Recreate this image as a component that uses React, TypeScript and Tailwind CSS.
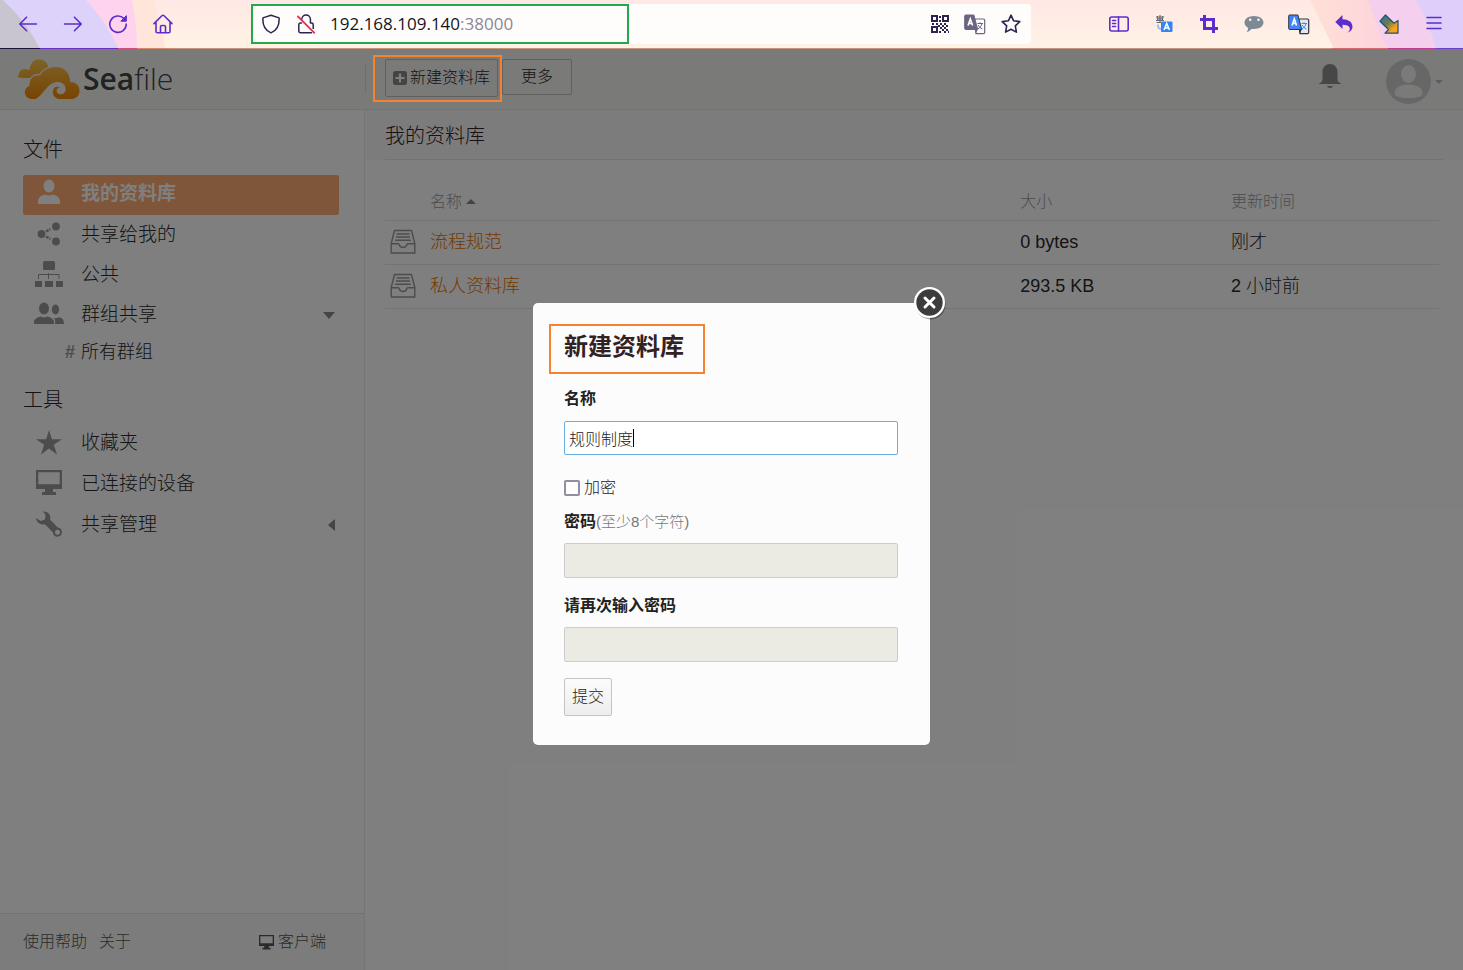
import React from "react";
import type { ReactNode } from "react";

/* ---------- Browser toolbar icons ---------- */

const stroke = { fill: "none", stroke: "currentColor", strokeLinecap: "round", strokeLinejoin: "round" } as const;

const BackIcon = () => (
  <svg width="20" height="20" viewBox="0 0 20 20" {...stroke} strokeWidth="1.6">
    <path d="M18.5 10H2M8.6 3.2 1.8 10l6.8 6.8" />
  </svg>
);
const ForwardIcon = () => (
  <svg width="20" height="20" viewBox="0 0 20 20" {...stroke} strokeWidth="1.6">
    <path d="M1.5 10H18M11.4 3.2 18.2 10l-6.8 6.8" />
  </svg>
);
const ReloadIcon = () => (
  <svg width="20" height="20" viewBox="0 0 20 20" {...stroke} strokeWidth="1.6">
    <path d="M16 4.6A8.2 8.2 0 1 0 18.2 10" />
    <path d="M18.4 2v5.2h-5.2z" fill="currentColor" strokeWidth="1" />
  </svg>
);
const HomeIcon = () => (
  <svg width="20" height="20" viewBox="0 0 20 20" {...stroke} strokeWidth="1.6">
    <path d="M1 9.6 8.9 1.7a1.5 1.5 0 0 1 2.2 0L19 9.6M3 8.5v9a1.3 1.3 0 0 0 1.3 1.3h11.4A1.3 1.3 0 0 0 17 17.500v-9" />
    <path d="M7.500 18.500v-5.500a1.500 1.500 0 0 1 1.500-1.500h2a1.500 1.500 0 0 1 1.500 1.500v5.500" />
  </svg>
);
const ShieldIcon = () => (
  <svg width="20" height="20" viewBox="0 0 20 20" {...stroke} strokeWidth="1.5">
    <path d="M10 1.200 17.300 3.600a1.200 1.200 0 0 1 .9 1.200C18.200 12 15.500 16.800 10 18.900 4.500 16.800 1.800 12 1.800 4.800a1.200 1.200 0 0 1 .9-1.200z" />
  </svg>
);
const InsecureIcon = () => (
  <svg width="20" height="20" viewBox="0 0 20 20" {...stroke} strokeWidth="1.5">
    <path d="M5.800 5.200a4.300 4.300 0 0 1 8.600 0V9h1.200a1.600 1.600 0 0 1 1.600 1.600v4M5.500 9H4.400a1.600 1.600 0 0 0-1.600 1.600v6.400A1.700 1.700 0 0 0 4.500 18.700h11" />
    <path d="M2 2.500 18.300 18.800" stroke="#e0345a" strokeWidth="1.800" />
  </svg>
);
const QrIcon = () => (
  <svg width="18" height="18" viewBox="0 0 18 18" fill="currentColor" shapeRendering="crispEdges">
    <path fillRule="evenodd" d="M0 0h7v7H0zM2 2v3h3V2zM11 0h7v7h-7zM13 2v3h3V2zM0 11h7v7H0zM2 13v3h3v-3z" />
    <path d="M8 1h2v2H8zM8 5h2v2H8zM1 8h2v2H1zM5 8h2v2H5zM9 8h2v2H9zM13 8h2v2h-2zM7 10h2v2H7zM11 10h2v2h-2zM15 10h2v2h-2zM9 12h2v2H9zM13 12h2v2h-2zM11 14h2v2h-2zM15 14h2v2h-2zM8 16h2v2H8zM13 16h2v2h-2zM17 16h1v2h-1z" />
  </svg>
);
const TranslateIcon = ({ front, back, ink }: { front: string; back: string; ink: string }) => (
  <svg width="22" height="21" viewBox="0 0 22 21">
    <path d="M10 5h9.500a1.200 1.200 0 0 1 1.200 1.200v12.300a1.200 1.200 0 0 1-1.200 1.200H12z" fill={back} stroke={ink} strokeWidth="1.200" />
    <path d="M13.500 9.500h5.500M16 8.300v1.200M18 9.500c-.6 2.500-2 4.300-4 5.500M14.200 11c.8 1.600 2.200 3.100 4.200 4" fill="none" stroke={front} strokeWidth="1" />
    <path d="M1.700 1h8.200l3.800 14.500H1.700a1 1 0 0 1-1-1V2a1 1 0 0 1 1-1z" fill={front} stroke={ink} strokeWidth="1" />
    <path d="m11 15.500 2.700 0-1.700 4z" fill={ink} />
    <path d="M4 11.500 6.300 5 8.600 11.500M4.800 9.500h3" fill="none" stroke="#fff" strokeWidth="1.600" />
  </svg>
);
const StarIcon = () => (
  <svg width="20" height="20" viewBox="0 0 20 20" {...stroke} strokeWidth="1.600">
    <path d="m10 1.200 2.600 5.600 6.200.8-4.500 4.300 1.100 6.200L10 15.200l-5.400 2.900 1.100-6.200L1.200 7.600l6.200-.8z" />
  </svg>
);
const SidebarIcon = () => (
  <svg width="20" height="20" viewBox="0 0 20 20" {...stroke} strokeWidth="1.600">
    <rect x="0.800" y="3" width="18.400" height="14" rx="2" />
    <path d="M9.500 3v14M3.600 6.500h3M3.600 9.500h3M3.600 12.500h3" />
  </svg>
);
const PageTranslateIcon = () => (
  <svg width="18" height="18" viewBox="0 0 18 18">
    <path d="M1 2h8M2.500 1v5M7.500 1v5M5 0v8M1 5.500h8M2 3.800h6M1.500 7.500h6" fill="none" stroke="#6b6b6b" strokeWidth="1.200" />
    <path d="M2.800 9.500c0 3 1 4.500 3.700 4.500" fill="none" stroke="#9cc3f5" strokeWidth="2" />
    <rect x="6" y="6.500" width="11.500" height="10.500" rx="1" fill="#3584f2" />
    <path d="m9 15 2.700-6.500L14.500 15M10 13h3.600" fill="none" stroke="#fff" strokeWidth="1.500" />
  </svg>
);
const CropIcon = () => (
  <svg width="18" height="18" viewBox="0 0 18 18" fill="none" stroke="currentColor" strokeWidth="3">
    <path d="M4.500 0v13.500H18M0 4.500h13.500V18" />
  </svg>
);
const ChatIcon = () => (
  <svg width="20" height="18" viewBox="0 0 20 18">
    <path d="M10 1c5.300 0 9.500 2.800 9.500 6.600 0 3.700-4.200 6.500-9.500 6.500-1 0-1.700 0-2.600-.2C6.300 15.500 4.500 16.600 2.500 17c1-1 1.600-2.400 1.600-4C1.900 11.800.5 9.900.5 7.600.5 3.800 4.700 1 10 1z" fill="#7d8a93" />
    <circle cx="6.200" cy="4.800" r="1.200" fill="#fff" />
    <circle cx="14.500" cy="4.800" r="1.200" fill="#fff" />
  </svg>
);
const UndoIcon = () => (
  <svg width="18" height="18" viewBox="0 0 18 18" fill="currentColor">
    <path d="M7.500 0v4.200c6 .1 10 2.800 10 7.600 0 2.800-1.900 5-5.500 6 2.300-1.400 3.200-3 2.700-4.800-.6-2.200-3.200-3.200-7.200-3.200V14L.3 7z" />
  </svg>
);
const ArrowCornerIcon = () => (
  <svg width="20" height="20" viewBox="0 0 20 20">
    <defs>
      <linearGradient id="corner-arrow" x1="0" y1="0" x2="1" y2="1">
        <stop offset="0.150" stopColor="#2f7d95" />
        <stop offset="0.450" stopColor="#6d7a4a" />
        <stop offset="0.750" stopColor="#f5a21c" />
      </linearGradient>
    </defs>
    <path d="M6.500 1 15 9.200 19 6.500V19.200H6L9.500 15.500 1 7.200z" fill="url(#corner-arrow)" stroke="#23506b" strokeWidth="1.200" strokeLinejoin="round" />
  </svg>
);
const MenuIcon = () => (
  <svg width="16" height="16" viewBox="0 0 16 16" {...stroke} strokeWidth="1.500">
    <path d="M1 1.500h14M1 7h14M1 12.500h14" />
  </svg>
);

/* ---------- Seafile icons ---------- */

const CloudLogo = () => (
  <svg width="65" height="42" viewBox="50 174 194 126" aria-hidden="true">
    <defs>
      <linearGradient id="cloud-fill" gradientUnits="userSpaceOnUse" x1="0" y1="178" x2="0" y2="297">
        <stop offset="0" stopColor="#fbc64f" />
        <stop offset="1" stopColor="#f08705" />
      </linearGradient>
    </defs>
    <path fill="url(#cloud-fill)" d="M54 228c8-2 2-20 20-20 8 0 11 2 16 2 2-20 14-32 28-32 16 0 28 12 28 25 0 30-40 28-54 31H70c-8 0-14-2-16-6z" />
    <path
      fill="url(#cloud-fill)"
      stroke="#f4f4f3"
      strokeWidth="8"
      paintOrder="stroke"
      d="M97 297c-13 0-21-10-21-20 0-9 6-17 14-19-2-20 12-36 32-32 8-16 28-25 46-25 26 0 44 19 44 45 20 0 28 14 28 26 0 16-12 25-26 25z"
    />
    <path fill="#f4f4f3" d="M110 302v-6c22-12 34-48 62-50 20-1 29 14 26 26-4 13-21 14-26 4-2-6 2-13 9-12-7-8-21-3-21 12 0 11 7 18 17 21v5z" />
  </svg>
);
const PersonIcon = () => (
  <svg width="24" height="26" viewBox="0 0 24 26" fill="currentColor">
    <ellipse cx="12" cy="7" rx="5.500" ry="6.500" />
    <path d="M1 25v-2.500C1 18.500 5 16 8.500 15.600c2 1.300 5 1.300 7 0C19 16 23 18.500 23 22.500V25z" />
  </svg>
);
const ShareIcon = () => (
  <svg width="24" height="24" viewBox="0 0 24 24" fill="currentColor">
    <circle cx="4.500" cy="12" r="3.900" />
    <circle cx="19" cy="4.500" r="3.900" />
    <circle cx="19" cy="19.500" r="3.900" />
    <path d="m9 9.500 4.500-2.400M9 14.500l4.500 2.400" stroke="currentColor" strokeWidth="2.500" strokeDasharray="3 1" />
  </svg>
);
const SitemapIcon = () => (
  <svg width="28" height="27" viewBox="0 0 28 27" fill="currentColor">
    <rect x="8" y="0" width="12" height="9" rx="1.500" />
    <path d="M3.500 18v-4.500h20.500V18M13.500 12v6" fill="none" stroke="currentColor" />
    <path d="M0 20h7v6H0zM10 20h8v6h-8zM21 20h7v6h-7z" />
  </svg>
);
const GroupIcon = () => (
  <svg width="30" height="24" viewBox="0 0 30 24" fill="currentColor">
    <ellipse cx="10" cy="6.500" rx="5" ry="6" />
    <path d="M0 22v-2c0-3 3.500-5 7-5.600 2 1.300 4 1.300 6 0 3.500.6 7 2.600 7 5.600v2z" />
    <ellipse cx="21.500" cy="7.500" rx="3.700" ry="5" />
    <path d="M21 22h9c0-4-1.500-6.200-5.500-6.800-1.600 1.200-3.800 1.200-5 .3 1.500 1.500 2 3.500 1.500 6.500z" />
  </svg>
);
const StarSolidIcon = () => (
  <svg width="26" height="25" viewBox="0 0 26 25" fill="currentColor">
    <path d="m13 0 2.900 9.200H26l-8.200 5.500L21 24.500l-8-6-8 6 3.200-9.800L0 9.200h10.100z" />
  </svg>
);
const MonitorIcon = ({ size }: { size: number }) => (
  <svg width={size} height={size} viewBox="0 0 26 26" fill="currentColor">
    <path fillRule="evenodd" d="M0 0h26v19H17v3h3v3H6v-3h3v-3H0zM2.300 2.300v12h21.400v-12z" />
  </svg>
);
const WrenchIcon = () => (
  <svg width="26" height="26" viewBox="0 0 26 26" fill="currentColor">
    <path fillRule="evenodd" d="M7 .5c4-.8 7.500 2.500 7.300 6-.1 1.300-.4 2-.4 2l8 8c2.500.2 4.100 2 4.100 4.600 0 2.800-2 4.700-4.600 4.700-2.700 0-4.400-1.900-4.500-4.300L9 13.300c-4 1-8.500-1.500-9-6.300l4.800 3L9 8.500 9.500 4zM21.500 18.700a2.500 2.500 0 1 0 0 5 2.500 2.500 0 0 0 0-5z" />
  </svg>
);
const LibraryIcon = () => (
  <svg width="26" height="26" viewBox="0 0 26 26" fill="none" stroke="currentColor" strokeWidth="1.400" strokeLinejoin="round">
    <path d="M4.500 1.500h17l3.300 13v9.500H1.200v-9.500zM1.200 14.800h6.800c.6 0 1 .4 1.200 1 .6 1.800 2 2.700 3.800 2.700s3.200-.9 3.800-2.700c.2-.6.6-1 1.200-1h6.800" />
    <path d="M6.500 5h13M6 8h14M5.200 11.300h15.600" strokeWidth="1.600" />
  </svg>
);
const BellIcon = () => (
  <svg width="22" height="25" viewBox="0 0 22 25" fill="currentColor">
    <path d="M11 0c4.500 0 7.500 3.500 7.500 8v7.500c0 2 1.500 3 3.500 4V20H0v-.5c2-1 3.500-2 3.500-4V8c0-4.500 3-8 7.500-8zM8 22h6c-.3 1.200-1.500 2-3 2s-2.700-.8-3-2z" />
  </svg>
);
const AvatarIcon = () => (
  <svg width="45" height="45" viewBox="0 0 45 45">
    <circle cx="22.500" cy="22.500" r="22.500" fill="#cfcfcf" />
    <ellipse cx="22.500" cy="15" rx="7.500" ry="9" fill="#f4f4f3" />
    <path d="M8.500 34c0-5 6-8.500 14-8.500s14 3.500 14 8.500c0 3-4 5-14 5s-14-2-14-5z" fill="#f4f4f3" />
  </svg>
);
const PlusSquareIcon = () => (
  <svg width="14" height="14" viewBox="0 0 14 14">
    <rect width="14" height="14" rx="2.500" fill="#888" />
    <path d="M7 2.500v9M2.500 7h9" stroke="#fff" strokeWidth="2.200" />
  </svg>
);
const CloseIcon = () => (
  <svg width="34" height="34" viewBox="0 0 34 34">
    <circle cx="17.500" cy="18.500" r="15" fill="#000" opacity="0.350" />
    <circle cx="16.500" cy="16.500" r="15.500" fill="#fff" />
    <circle cx="16.500" cy="16.500" r="13.200" fill="#3c3c3c" />
    <path d="m12 12 9 9m0-9-9 9" stroke="#fff" strokeWidth="3" strokeLinecap="round" />
  </svg>
);

/* ---------- Browser toolbar ---------- */

function ThemeArt() {
  return (
    <>
      <div className="absolute inset-0 bg-linear-to-b from-[#ffe8e5] to-[#fff3e5]" />
      <svg className="absolute left-0 top-0" width="170" height="49" viewBox="0 0 170 49" aria-hidden="true">
        <path d="M0 0h153q9 24 12 49H0z" fill="#ffe5da" />
        <path d="M0 0h132q5 24 5 49H0z" fill="#fdd3ee" />
        <path d="M0 0h86q20 22 33 49H0z" fill="#ddd2fa" />
        <path d="M0 0h3q24 22 37 49H0z" fill="#c9c5cf" />
        <path d="M0 48.500h40" stroke="#1d1140" />
        <path d="M40 48.500h78" stroke="#6a2fc4" />
        <path d="M118 48.500h19" stroke="#d04f80" />
        <path d="M137 48.500h33" stroke="#cf8a6a" />
      </svg>
      <div className="absolute bottom-0 left-[170px] right-[130px] h-px bg-[#c8957a]" />
      <svg className="absolute right-0 top-0" width="155" height="49" viewBox="0 0 155 49" aria-hidden="true">
        <defs>
          <linearGradient id="theme-peach" x1="0" y1="0" x2="1" y2="0">
            <stop offset="0" stopColor="#ffe0d6" />
            <stop offset="0.500" stopColor="#fdd3dc" />
          </linearGradient>
        </defs>
        <path d="M2 0q12 24 24 49h129V0z" fill="url(#theme-peach)" />
        <path d="M60 0q8 25 20 49h75V0z" fill="#f4cfee" />
        <path d="M108 0q14 24 20 49h27V0z" fill="#ddcffa" />
        <path d="M24 48.500h56" stroke="#d56a70" />
        <path d="M80 48.500h48" stroke="#bd3f94" />
        <path d="M128 48.500h27" stroke="#6b3fd0" />
      </svg>
    </>
  );
}

function ToolButton({ label, children }: { label: string; children: ReactNode }) {
  return (
    <button type="button" aria-label={label} className="flex h-10 w-[45px] items-center justify-center">
      {children}
    </button>
  );
}

function BrowserBar() {
  return (
    <header className="relative h-[49px] text-[#5b2ecb]">
      <ThemeArt />
      <div className="relative flex h-12 items-center pl-[5px] pr-[7px]">
        <ToolButton label="后退"><BackIcon /></ToolButton>
        <ToolButton label="前进"><ForwardIcon /></ToolButton>
        <ToolButton label="刷新"><ReloadIcon /></ToolButton>
        <ToolButton label="主页"><HomeIcon /></ToolButton>
        <div className="relative ml-[66px] mr-[65px] flex h-10 flex-1 items-center rounded bg-[#fffdfb] pl-2.5 text-[#2f2450]">
          <span className="pointer-events-none absolute left-0 top-0 h-10 w-[378px] border-2 border-[#22a94a]" />
          <span className="flex items-center gap-[15px]">
            <ShieldIcon />
            <InsecureIcon />
          </span>
          <span className="ml-3.5 font-['Open_Sans',sans-serif] text-[17px] font-normal leading-6 text-[#15141a]">
            192.168.109.140<span className="text-[#8b8794]">:38000</span>
          </span>
          <span className="ml-auto flex items-center gap-[15px] pr-2.5">
            <QrIcon />
            <TranslateIcon front="#6c6480" back="#fffdfb" ink="#6c6480" />
            <StarIcon />
          </span>
        </div>
        <ToolButton label="侧栏"><SidebarIcon /></ToolButton>
        <ToolButton label="网页翻译"><PageTranslateIcon /></ToolButton>
        <ToolButton label="截图"><CropIcon /></ToolButton>
        <ToolButton label="聊天"><ChatIcon /></ToolButton>
        <ToolButton label="翻译"><TranslateIcon front="#4285f4" back="#e3e8ef" ink="#2d3540" /></ToolButton>
        <ToolButton label="撤销"><UndoIcon /></ToolButton>
        <ToolButton label="下载"><ArrowCornerIcon /></ToolButton>
        <ToolButton label="菜单"><MenuIcon /></ToolButton>
      </div>
    </header>
  );
}

/* ---------- Application header ---------- */

function AppHeader() {
  return (
    <header className="flex h-[61px] border-b border-[#e6e6e6] bg-[#f4f4f3]">
      <a href="#home" className="flex w-[365px] items-center pl-4 font-['Open_Sans',sans-serif] text-[30px] leading-8 text-[#444]">
        <CloudLogo />
        <span className="ml-0.5 font-semibold">Sea</span>
        <span className="font-light">file</span>
      </a>
      <div className="flex flex-1 items-start justify-between pr-5">
        <div className="flex">
          <span className="mt-3.5 h-[30px] w-px bg-[#dcdcdc]" />
          <div className="relative ml-[19px] mt-2.5">
            <button type="button" className="flex h-[38px] items-center gap-[3px] rounded-xs border border-[#c0c0c0] px-[7px] text-base">
              <PlusSquareIcon />
              新建资料库
            </button>
            <span className="pointer-events-none absolute -left-3 -right-1 -top-1 z-30 h-[47px] border-2 border-[#f5822e]" />
          </div>
          <button type="button" className="ml-1 mt-2.5 h-9 rounded-xs border border-[#c0c0c0] px-[18px] text-base">
            更多
          </button>
        </div>
        <div className="flex items-start">
          <button type="button" aria-label="通知" className="mt-[15px] text-[#8f8f8f]"><BellIcon /></button>
          <button type="button" aria-label="账户" className="ml-[45px] mt-2.5 flex items-center gap-1">
            <AvatarIcon />
            <span className="h-0 w-0 border-x-4 border-t-4 border-x-transparent border-t-[#bbb]" />
          </button>
        </div>
      </div>
    </header>
  );
}

/* ---------- Sidebar ---------- */

function NavItem({ icon, label, active, end }: { icon: ReactNode; label: string; active?: boolean; end?: ReactNode }) {
  return (
    <li>
      <a
        href="#nav"
        className={
          active
            ? "flex h-10 items-center rounded-xs bg-[#feac74] pb-0.5 pr-1 text-[19px] font-bold text-white"
            : "flex h-10 items-center pr-1 text-[19px]"
        }
      >
        <span className={active ? "flex w-[52px] justify-center pb-1" : "flex w-[52px] justify-center pb-0.5 text-[#999]"}>{icon}</span>
        <span className="ml-1.5 flex-1">{label}</span>
        {end}
      </a>
    </li>
  );
}

function Sidebar() {
  return (
    <aside className="flex w-[365px] flex-col border-r border-[#ebebeb]">
      <nav className="flex-1 pl-[23px] pr-[25px] pt-[25px]">
        <h3 className="text-xl leading-[30px] text-[#322]">文件</h3>
        <ul className="mt-2.5">
          <NavItem active icon={<PersonIcon />} label="我的资料库" />
          <NavItem icon={<ShareIcon />} label="共享给我的" />
          <NavItem icon={<SitemapIcon />} label="公共" />
          <NavItem
            icon={<GroupIcon />}
            label="群组共享"
            end={<span className="h-0 w-0 border-x-[6px] border-t-[7px] border-x-transparent border-t-[#888]" />}
          />
          <li>
            <a href="#groups" className="flex h-[34px] items-center gap-1.5 pl-[42px] text-lg">
              <span className="font-bold text-[#999]">#</span>
              所有群组
            </a>
          </li>
        </ul>
        <h3 className="mt-4 text-xl leading-[30px] text-[#322]">工具</h3>
        <ul className="mt-2 flex flex-col gap-px">
          <NavItem icon={<StarSolidIcon />} label="收藏夹" />
          <NavItem icon={<MonitorIcon size={26} />} label="已连接的设备" />
          <NavItem
            icon={<WrenchIcon />}
            label="共享管理"
            end={<span className="h-0 w-0 border-y-[6px] border-r-[7px] border-y-transparent border-r-[#888]" />}
          />
        </ul>
      </nav>
      <footer className="flex h-[57px] items-center border-t border-[#e6e6e6] bg-[#f9f9f8] pl-[23px] pr-[38px] text-base text-[#555]">
        <a href="#help">使用帮助</a>
        <a href="#about" className="ml-3">关于</a>
        <a href="#client" className="ml-auto flex items-center gap-1">
          <MonitorIcon size={15} />
          客户端
        </a>
      </footer>
    </aside>
  );
}

/* ---------- Library list ---------- */

const libraries = [
  { name: "流程规范", size: "0 bytes", updated: "刚才" },
  { name: "私人资料库", size: "293.5 KB", updated: "2 小时前" },
];

function LibraryList() {
  return (
    <main className="flex-1">
      <div className="bg-[#f9f9f8] px-5">
        <h2 className="border-b border-[#e6e6e6] pb-[7px] pt-[11px] text-xl leading-[31px] text-[#322]">我的资料库</h2>
      </div>
      <div className="pl-5 pr-6 pt-6">
        <table className="w-full table-fixed border-collapse text-left text-lg">
          <colgroup>
            <col className="w-[45px]" />
            <col />
            <col className="w-1/5" />
            <col className="w-[208px]" />
          </colgroup>
          <thead>
            <tr className="h-9 border-b border-[#e6e6e6] text-base text-[#999]">
              <th aria-label="类型" />
              <th className="font-light">
                <button type="button" className="flex items-center gap-1">
                  名称
                  <span className="h-0 w-0 border-x-[5px] border-b-[5px] border-x-transparent border-b-[#888]" />
                </button>
              </th>
              <th className="font-light">大小</th>
              <th className="font-light">更新时间</th>
            </tr>
          </thead>
          <tbody>
            {libraries.map((lib) => (
              <tr key={lib.name} className="h-11 border-b border-[#e6e6e6]">
                <td className="pl-[5px] text-[#999]"><LibraryIcon /></td>
                <td><a href="#library" className="text-[#e67300]">{lib.name}</a></td>
                <td>{lib.size}</td>
                <td>{lib.updated}</td>
              </tr>
            ))}
          </tbody>
        </table>
      </div>
    </main>
  );
}

/* ---------- New library dialog ---------- */

function NewLibraryDialog() {
  return (
    <div className="absolute inset-0 z-20 flex items-center justify-center bg-black/50 pt-7">
      <form
        role="dialog"
        aria-labelledby="dialog-title"
        className="relative flex w-[397px] flex-col items-start rounded-[5px] bg-[#fcfcfc] pb-[29px] pl-[31px] pr-8 pt-[26px] text-base leading-6 text-[#222]"
      >
        <button type="button" aria-label="关闭" className="absolute -right-[17px] -top-[17px]"><CloseIcon /></button>
        <div className="relative">
          <h2 id="dialog-title" className="text-2xl font-bold leading-9 text-[#322]">新建资料库</h2>
          <span className="pointer-events-none absolute -left-[15px] -top-[5px] h-[50px] w-[156px] border-2 border-[#f5822e]" />
        </div>
        <label htmlFor="lib-name" className="mt-[22px] font-bold">名称</label>
        <div className="relative mt-2.5 w-full">
          <input
            id="lib-name"
            type="text"
            defaultValue="规则制度"
            className="block h-[34px] w-full rounded-xs border border-[#66afe0] bg-white px-1 outline-none"
          />
          <span className="absolute left-[69px] top-2 h-[18px] w-px bg-black" />
        </div>
        <div className="mt-[21px] flex items-center gap-1">
          <input
            id="lib-encrypt"
            type="checkbox"
            className="h-4 w-4 appearance-none rounded-xs border-2 border-[#8f8f9d] bg-white"
          />
          <label htmlFor="lib-encrypt">加密</label>
        </div>
        <label htmlFor="lib-pass" className="mt-2.5 font-bold">
          密码<span className="text-[15px] font-light text-[#777]">(至少8个字符)</span>
        </label>
        <input id="lib-pass" type="password" disabled className="mt-[9px] h-[35px] w-full rounded-xs border border-[#ccc] bg-[#ebebe4] px-1" />
        <label htmlFor="lib-pass-again" className="mt-4 font-bold">请再次输入密码</label>
        <input id="lib-pass-again" type="password" disabled className="mt-[9px] h-[35px] w-full rounded-xs border border-[#ccc] bg-[#ebebe4] px-1" />
        <button type="submit" className="mt-4 h-[38px] rounded-xs border border-[#c4c4c4] bg-linear-to-b from-[#fcfcfc] to-[#ededed] px-[7px]">
          提交
        </button>
      </form>
    </div>
  );
}

export default function App() {
  return (
    <div className="flex min-h-screen flex-col bg-white font-['Liberation_Sans','Noto_Sans_CJK_SC',sans-serif] font-light text-[#2a2a2a]">
      <BrowserBar />
      <div className="relative flex flex-1 flex-col">
        <AppHeader />
        <div className="flex flex-1">
          <Sidebar />
          <LibraryList />
        </div>
        <NewLibraryDialog />
      </div>
    </div>
  );
}
